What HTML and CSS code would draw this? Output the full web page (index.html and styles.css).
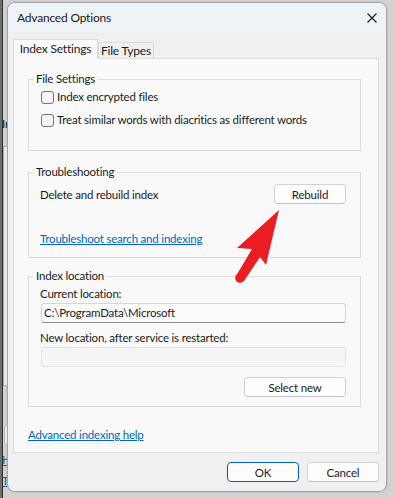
FILE: index.html
```html
<!DOCTYPE html>
<html lang="en">
<head>
    <meta charset="UTF-8">
    <meta name="viewport" content="width=device-width, initial-scale=1.0">
    <title>Advanced Options</title>
    <link rel="stylesheet" href="styles.css">
</head>
<body>
    <div class="desktop">
        <!-- bits of the window behind the dialog -->
        <div class="peek">
            <span class="peek-text">In</span>
            <span class="peek-box"></span>
            <span class="peek-btn"></span>
            <a class="peek-link peek-link-1">Ho</a>
            <a class="peek-link peek-link-2">Tr</a>
        </div>

        <div class="dialog">
            <div class="titlebar">
                <span class="title">Advanced Options</span>
                <button class="close" aria-label="Close">
                    <svg width="10" height="10" viewBox="0 0 10 10">
                        <path d="M0.5 0.5 L9.5 9.5 M9.5 0.5 L0.5 9.5" stroke="#1a1a1a" stroke-width="1.1" fill="none"/>
                    </svg>
                </button>
            </div>

            <div class="content">
                <div class="tabs">
                    <div class="tab active">Index Settings</div>
                    <div class="tab">File Types</div>
                </div>

                <div class="tab-panel">
                    <fieldset class="group group-files">
                        <legend>File Settings</legend>
                        <label class="check-row">
                            <input type="checkbox">
                            <span>Index encrypted files</span>
                        </label>
                        <label class="check-row">
                            <input type="checkbox">
                            <span>Treat similar words with diacritics as different words</span>
                        </label>
                    </fieldset>

                    <fieldset class="group group-trouble">
                        <legend>Troubleshooting</legend>
                        <div class="action-row">
                            <span>Delete and rebuild index</span>
                            <button class="button button-rebuild">Rebuild</button>
                        </div>
                        <a href="#" class="link link-trouble">Troubleshoot search and indexing</a>
                    </fieldset>

                    <fieldset class="group group-location">
                        <legend>Index location</legend>
                        <div class="field-label">Current location:</div>
                        <div class="field">C:\ProgramData\Microsoft</div>
                        <div class="field-label field-label-new">New location, after service is restarted:</div>
                        <div class="field field-disabled"></div>
                        <div class="button-row">
                            <button class="button button-select">Select new</button>
                        </div>
                    </fieldset>

                    <a href="#" class="link link-help">Advanced indexing help</a>
                </div>

                <div class="footer">
                    <button class="button button-ok">OK</button>
                    <button class="button">Cancel</button>
                </div>
            </div>
        </div>

        <svg class="arrow" width="394" height="498" viewBox="0 0 394 498">
            <polygon points="279,210 237,248 252,249 236,276 244,281 260,257 266,265" fill="#ec1c24"/>
            <circle cx="240" cy="278" r="4.8" fill="#ec1c24"/>
        </svg>
    </div>
</body>
</html>
```

FILE: styles.css
```css
:root {
    --text: #1b1b1b;
    --link: #0067c0;
    --face: #f0f0f0;
    --panel: #f9f9f9;
    --line: #dcdcdc;
    --accent: #005fb8;
}

* {
    box-sizing: border-box;
    margin: 0;
    padding: 0;
}

body {
    width: 394px;
    height: 498px;
    overflow: hidden;
    background: linear-gradient(to right, #6e6e6e 0 2px, #2e2e2e 2px 3px, #d2d2d2 3px);
    font-family: "Segoe UI", Lato, sans-serif;
    font-size: 11.5px;
    letter-spacing: -0.2px;
    color: var(--text);
}

.desktop {
    position: relative;
    height: 100%;
    padding: 2px 0 0 7px;
}

/* window behind */
.peek {
    position: absolute;
    left: 3px;
    top: 0;
    width: 4px;
    height: 100%;
    overflow: hidden;
}

.peek-text,
.peek-link {
    position: absolute;
    left: -1px;
    line-height: 14px;
    white-space: nowrap;
}

.peek-text {
    top: 117px;
    color: #111;
}

.peek-box {
    position: absolute;
    left: 0;
    top: 146px;
    width: 6px;
    height: 240px;
    border: 1px solid #a8a8a8;
    background: #e8e8e8;
}

.peek-btn {
    position: absolute;
    left: 1px;
    top: 425px;
    width: 6px;
    height: 20px;
    border: 1px solid #b8b8b8;
    border-radius: 3px;
    background: #ececec;
}

.peek-link {
    color: var(--link);
    text-decoration: underline;
}

.peek-link-1 { top: 453px; }
.peek-link-2 { top: 474px; }

/* dialog */
.dialog {
    width: 380px;
    height: 490px;
    display: flex;
    flex-direction: column;
    background: var(--face);
    border: 1px solid #a6a6a6;
    border-radius: 8px;
    overflow: hidden;
    box-shadow: 0 0 0 1px rgba(0, 0, 0, 0.06);
}

.titlebar {
    height: 29px;
    display: flex;
    align-items: center;
    justify-content: space-between;
    padding: 0 9px 0 9px;
    background: #eef3f8;
}

.title {
    font-size: 12px;
}

.close {
    background: none;
    border: none;
    width: 10px;
    height: 10px;
    display: flex;
}

.content {
    flex: 1;
    padding: 7px 7px 0 5px;
    display: flex;
    flex-direction: column;
}

.tabs {
    display: flex;
    align-items: flex-end;
}

.tab {
    height: 16px;
    width: 56px;
    display: flex;
    align-items: center;
    justify-content: center;
    white-space: nowrap;
    border: 1px solid var(--line);
    border-bottom: none;
    background: var(--face);
    line-height: 15px;
    font-size: 12px;
}

.tab.active {
    position: relative;
    z-index: 1;
    width: 85px;
    height: 20px;
    margin-bottom: -1px;
    background: var(--panel);
    padding-bottom: 2px;
}

.tab-panel {
    height: 395px;
    border: 1px solid var(--line);
    background: var(--panel);
    padding: 12px 17px 0 14px;
    display: flex;
    flex-direction: column;
}

.group {
    border: 1px solid var(--line);
    padding: 0 14px 0 11px;
    min-width: 0;
    display: flex;
    flex-direction: column;
}

.group legend {
    margin-left: -7px;
    padding: 0 3px;
    line-height: 16px;
}

.group-files {
    padding-top: 2px;
    padding-bottom: 22px;
    gap: 7px;
}

.group-trouble {
    margin-top: 13px;
    padding-top: 4px;
    padding-bottom: 10px;
}

.group-location {
    margin-top: 10px;
    padding-top: 2px;
    padding-bottom: 9px;
}

.check-row {
    display: flex;
    align-items: center;
    gap: 3px;
    height: 16px;
    line-height: 16px;
    white-space: nowrap;
}

.check-row input {
    appearance: none;
    flex: none;
    width: 13px;
    height: 13px;
    margin-left: 1px;
    border: 1px solid #737373;
    border-radius: 3px;
    background: #f4f4f4;
}

.action-row {
    display: flex;
    align-items: center;
    justify-content: space-between;
    height: 20px;
}

.button {
    font-family: inherit;
    font-size: 11.5px;
    letter-spacing: inherit;
    color: var(--text);
    height: 20px;
    background: #fdfdfd;
    border: 1px solid #d3d3d3;
    border-bottom-color: #c2c2c2;
    border-radius: 4px;
}

.button-rebuild {
    width: 72px;
}

.link {
    color: var(--link);
    text-decoration: underline;
    line-height: 16px;
    align-self: flex-start;
}

.link-trouble {
    margin-top: 27px;
}

.field-label {
    line-height: 16px;
}

.field-label-new {
    margin-top: 7px;
}

.field {
    height: 20px;
    width: 305px;
    margin: 1px 0 0 1px;
    padding-left: 2px;
    line-height: 18px;
    background: #fbfbfb;
    border: 1px solid #d6d6d6;
    border-bottom-color: #8c8c8c;
    border-radius: 3px;
}

.field-disabled {
    background: #f5f5f5;
    border-color: #e2e2e2;
}

.button-row {
    display: flex;
    justify-content: flex-end;
    margin-top: 10px;
}

.button-select {
    width: 102px;
}

.link-help {
    margin-top: 20px;
}

.footer {
    display: flex;
    justify-content: flex-end;
    gap: 8px;
    margin-top: 9px;
}

.footer .button {
    width: 72px;
}

.button-ok {
    border-color: var(--accent);
}

.arrow {
    position: absolute;
    left: 0;
    top: 0;
    pointer-events: none;
}
```
